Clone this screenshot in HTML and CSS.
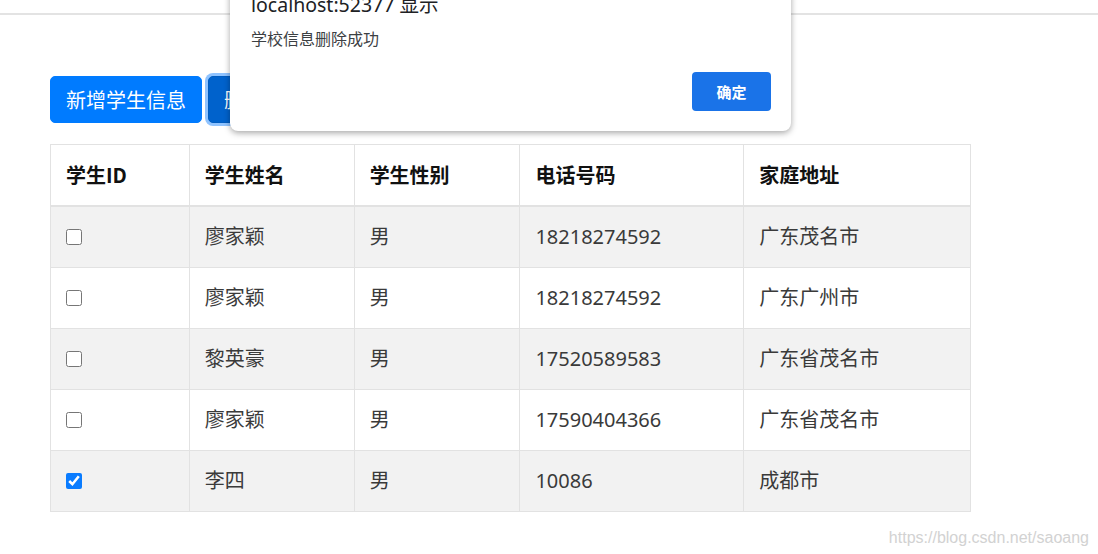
FILE: index.html
```html
<!DOCTYPE html>
<html lang="zh-CN">
<head>
<meta charset="utf-8">
<title>学生信息</title>
<link rel="stylesheet" href="styles.css">
</head>
<body>
<div class="topbar"></div>
<main class="content">
  <div class="toolbar">
    <button class="btn">新增学生信息</button>
    <button class="btn btn-focus">删除学生信息</button>
  </div>
  <table class="grid">
    <colgroup>
      <col class="c1"><col class="c2"><col class="c3"><col class="c4"><col class="c5">
    </colgroup>
    <thead>
      <tr><th>学生ID</th><th>学生姓名</th><th>学生性别</th><th>电话号码</th><th>家庭地址</th></tr>
    </thead>
    <tbody>
      <tr><td><input type="checkbox" class="chk"></td><td>廖家颖</td><td>男</td><td>18218274592</td><td>广东茂名市</td></tr>
      <tr><td><input type="checkbox" class="chk"></td><td>廖家颖</td><td>男</td><td>18218274592</td><td>广东广州市</td></tr>
      <tr><td><input type="checkbox" class="chk"></td><td>黎英豪</td><td>男</td><td>17520589583</td><td>广东省茂名市</td></tr>
      <tr><td><input type="checkbox" class="chk"></td><td>廖家颖</td><td>男</td><td>17590404366</td><td>广东省茂名市</td></tr>
      <tr><td><input type="checkbox" class="chk" checked></td><td>&#x674E;&#x56DB;</td><td>男</td><td>10086</td><td>成都市</td></tr>
    </tbody>
  </table>
</main>
<div class="dialog">
  <div class="dialog-title">localhost:52377 显示</div>
  <div class="dialog-msg">学校信息删除成功</div>
  <div class="dialog-actions"><button class="dialog-btn">确定</button></div>
</div>
<div class="watermark">https://blog.csdn.net/saoang</div>
</body>
</html>
```
FILE: styles.css
```css
html, body {
  margin: 0;
  padding: 0;
  background: #fff;
  width: 1098px;
  height: 554px;
  overflow: hidden;
  position: relative;
  font-family: "Noto Sans", "Noto Sans CJK SC", sans-serif;
  color: #212529;
}

.topbar {
  height: 13px;
  border-bottom: 2px solid #e3e3e3;
}

.content {
  padding: 61px 0 0 50px;
}

.toolbar {
  display: flex;
  gap: 6px;
}

.btn {
  font-family: "Noto Sans CJK SC", "Noto Sans", sans-serif;
  font-size: 20px;
  line-height: 30px;
  height: 47px;
  padding: 0 15px;
  border: 1px solid #007bff;
  border-radius: 5px;
  background: #007bff;
  color: #fff;
}

.btn-focus {
  background: #0062cc;
  border-color: #005cbf;
  box-shadow: 0 0 0 3px #8fc3ff;
}

.grid {
  margin-top: 21px;
  border-collapse: collapse;
  width: 921px;
  font-size: 20px;
}

.c1 { width: 139px; }
.c2 { width: 165px; }
.c3 { width: 166px; }
.c4 { width: 224px; }
.c5 { width: 227px; }

.grid th,
.grid td {
  border: 1px solid #e2e2e2;
  padding: 15px 15px;
  line-height: 30px;
  text-align: left;
  vertical-align: middle;
}

.grid th {
  font-family: "Noto Sans CJK SC", "Noto Sans", sans-serif;
  font-weight: 700;
  color: #111;
  border-bottom-width: 2px;
}

.grid td {
  color: #3a3a3a;
  font-family: "Noto Sans", "Noto Sans CJK SC", sans-serif;
  height: 30px;
}

.grid tbody tr:nth-child(odd) {
  background: #f2f2f2;
}

.chk {
  width: 16px;
  height: 16px;
  margin: 0;
  display: block;
  accent-color: #0a7cff;
}

.dialog {
  position: absolute;
  left: 230px;
  top: -20px;
  width: 561px;
  height: 151px;
  box-sizing: border-box;
  background: #fff;
  border-radius: 0 0 8px 8px;
  box-shadow: 0 2px 6px rgba(0, 0, 0, 0.35);
  padding: 13px 20px 0 21px;
  display: flex;
  flex-direction: column;
  font-family: "Noto Sans", "Noto Sans CJK SC", sans-serif;
}

.dialog-title {
  font-size: 19.5px;
  line-height: 24px;
  color: #202124;
}

.dialog-msg {
  font-family: "Noto Sans CJK SC", sans-serif;
  font-size: 16px;
  line-height: 20px;
  margin-top: 11px;
  color: #3c4043;
}

.dialog-actions {
  display: flex;
  justify-content: flex-end;
  margin-top: 24px;
}

.dialog-btn {
  width: 79px;
  height: 39px;
  border: 0;
  border-radius: 4px;
  background: #1a73e8;
  color: #fff;
  font-family: "Noto Sans CJK SC", sans-serif;
  font-size: 15px;
  font-weight: 700;
}

.watermark {
  position: absolute;
  right: 9px;
  bottom: 7px;
  font-family: "Liberation Sans", Arial, sans-serif;
  font-size: 16px;
  color: #d2d2d2;
}
```
